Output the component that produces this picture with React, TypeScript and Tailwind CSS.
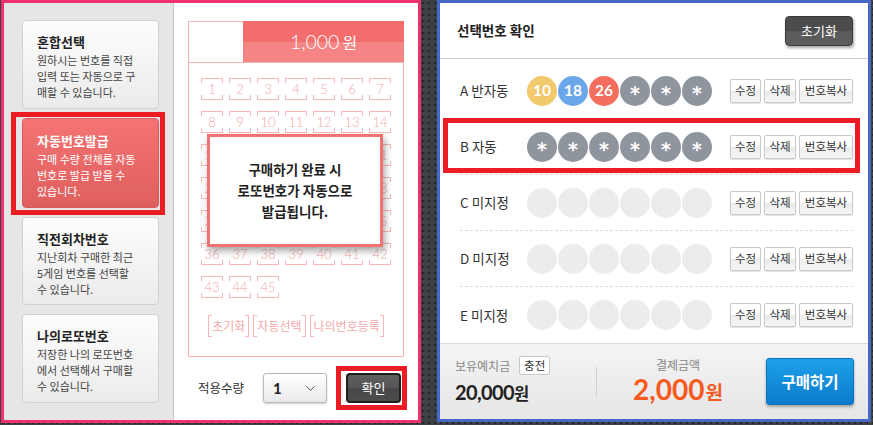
import React from 'react';
import { ChevronDown } from 'lucide-react';

const KR = "font-['Noto_Sans_CJK_KR',sans-serif]";
const NUM = "font-['Lato','Noto_Sans_CJK_KR',sans-serif]";

const sideCards = [
  { title: '혼합선택', lines: ['원하시는 번호를 직접', '입력 또는 자동으로 구', '매할 수 있습니다.'] },
  { title: '자동번호발급', lines: ['구매 수량 전체를 자동', '번호로 발급 받을 수', '있습니다.'] },
  { title: '직전회차번호', lines: ['지난회차 구매한 최근', '5게임 번호를 선택할', '수 있습니다.'] },
  { title: '나의로또번호', lines: ['저장한 나의 로또번호', '에서 선택해서 구매할', '수 있습니다.'] },
];

type Ball = { n: string; c: string };
const star: Ball = { n: '*', c: 'bg-[#8f959d]' };
const empty: Ball = { n: '', c: 'bg-[#ececec]' };

const rows: { label: string; balls: Ball[]; picked?: boolean }[] = [
  {
    label: 'A 반자동',
    balls: [
      { n: '10', c: 'bg-[#f2c96c]' },
      { n: '18', c: 'bg-[#6aa7e8]' },
      { n: '26', c: 'bg-[#f46e5f]' },
      star,
      star,
      star,
    ],
  },
  { label: 'B 자동', balls: [star, star, star, star, star, star], picked: true },
  { label: 'C 미지정', balls: [empty, empty, empty, empty, empty, empty] },
  { label: 'D 미지정', balls: [empty, empty, empty, empty, empty, empty] },
  { label: 'E 미지정', balls: [empty, empty, empty, empty, empty, empty] },
];

function SideCard({ title, lines, active, h }: { title: string; lines: string[]; active?: boolean; h: string }) {
  return (
    <div
      className={
        active
          ? `w-[137px] ${h} rounded-[4px] border border-[#d85c5c] bg-linear-to-b from-[#f47474] to-[#df5f5f] pl-[14px] pt-[13px] text-white`
          : `w-[137px] ${h} rounded-[4px] border border-[#d2d2d2] bg-linear-to-b from-[#fdfdfd] to-[#ebebeb] pl-[14px] pt-[12px] text-[#444]`
      }
    >
      <div className={`text-[13px] font-bold leading-[18px] ${active ? 'text-white' : 'text-[#222]'}`}>{title}</div>
      <div className="mt-[1px] text-[11px] leading-[16px]">
        {lines.map((l) => (
          <div key={l}>{l}</div>
        ))}
      </div>
    </div>
  );
}

function NumBox({ n }: { n: number }) {
  return (
    <div className="relative w-[22px] h-[22px] border border-[#f6b8b8] flex items-center justify-center">
      <span className="absolute -left-px -right-px top-[4px] bottom-[4px] bg-white" />
      <span className={`relative ${NUM} text-[13px] font-light leading-none text-[#f4a9a9]`}>{n}</span>
    </div>
  );
}

function BracketBtn({ label }: { label: string }) {
  return (
    <div className="relative h-[22px] px-[3px] border border-[#f6b8b8] flex items-center">
      <span className="absolute left-[3px] right-[3px] -top-px -bottom-px bg-white" />
      <span className="relative text-[12px] leading-none text-[#f4a9a9]">{label}</span>
    </div>
  );
}

function SmallBtn({ label, w }: { label: string; w: string }) {
  return (
    <div
      className={`${w} h-[24px] flex items-center justify-center rounded-[2px] border border-[#c9c9c9] bg-[image:linear-gradient(#ffffff_0%,#ffffff_50%,#ececec_51%,#f6f6f6_100%)] shadow-[0_1px_1px_rgba(0,0,0,0.12)] text-[11.5px] text-[#333]`}
    >
      {label}
    </div>
  );
}

export default function App() {
  const nums = Array.from({ length: 45 }, (_, i) => i + 1);

  return (
    <div
      className={`${KR} w-[873px] h-[425px] overflow-hidden flex gap-[16px] pl-[1px] bg-[#3d4044] bg-[image:radial-gradient(circle,#25272a_1px,transparent_1.6px)] bg-[length:6px_6px]`}
    >
      {/* left: 번호 선택 */}
      <div className="w-[420px] h-[423px] border-[3px] border-[#ef316d] bg-white flex">
        <div className="w-[170px] bg-[#e6e6e6] border-r border-[#c8c8c8] pl-[18px] pt-[17px] flex flex-col">
          <SideCard {...sideCards[0]} h="h-[89px]" />
          <div className="-ml-[11px] mt-[3px] w-[154px] border-[5px] border-[#ec1c24] pl-[6px] pt-[1px] pb-[2px]">
            <SideCard {...sideCards[1]} h="h-[90px]" active />
          </div>
          <div className="mt-[2px]">
            <SideCard {...sideCards[2]} h="h-[88px]" />
          </div>
          <div className="mt-[9px]">
            <SideCard {...sideCards[3]} h="h-[89px]" />
          </div>
        </div>

        <div className="relative flex-1 flex flex-col pl-[14px] pt-[18px]">
          <div className="w-[216px] h-[336px] border border-[#f5b4b4] flex flex-col">
            <div className="h-[42px] border-b border-[#f5b4b4] flex -mt-px -mr-px">
              <div className="w-[54px]" />
              <div className="flex-1 bg-[image:linear-gradient(#f36d6d_0%,#f36d6d_50%,#f58585_50%,#f58585_100%)] flex items-center justify-center text-white">
                <span className={`${NUM} text-[19.5px] font-light`}>1,000</span>
                <span className="ml-[3px] text-[16px]">원</span>
              </div>
            </div>
            <div className="pt-[15px] pl-[12px] grid grid-cols-[repeat(7,22px)] gap-x-[6px] gap-y-[11px]">
              {nums.map((n) => (
                <NumBox key={n} n={n} />
              ))}
            </div>
            <div className="mt-[17px] flex justify-center gap-[4px]">
              <BracketBtn label="초기화" />
              <BracketBtn label="자동선택" />
              <BracketBtn label="나의번호등록" />
            </div>
          </div>

          <div className="mt-[9px] flex items-center">
            <span className="ml-[10px] text-[12.5px] text-[#333]">적용수량</span>
            <div className="ml-[19px] w-[64px] h-[30px] rounded-[3px] border border-[#b9b9b9] bg-linear-to-b from-white to-[#e9e9e9] shadow-[0_1px_2px_rgba(0,0,0,0.2)] flex items-center justify-between pl-[9px] pr-[8px]">
              <span className={`${NUM} text-[15px] font-bold text-[#222]`}>1</span>
              <ChevronDown size={15} strokeWidth={1.5} color="#444" />
            </div>
            <div className="ml-[9px] w-[71px] border-[5px] border-[#ec1c24] pl-[5px] pr-[1px] py-[2px]">
              <div className="w-[55px] h-[30px] rounded-[4px] border-2 border-[#1f1f1f] bg-[image:linear-gradient(#5e5e5e_0%,#555_50%,#474747_50%,#4d4d4d_100%)] flex items-center justify-center text-[13px] text-white">
                확인
              </div>
            </div>
          </div>

          <div className="absolute left-[33px] top-[131px] w-[176px] h-[113px] border-[3px] border-[#f17272] bg-white shadow-[2px_4px_7px_rgba(0,0,0,0.35)] flex items-center justify-center text-center text-[13.5px] font-bold leading-[21px] text-[#222]">
            <div>
              구매하기 완료 시
              <br />
              로또번호가 자동으로
              <br />
              발급됩니다.
            </div>
          </div>
        </div>
      </div>

      {/* right: 선택번호 확인 */}
      <div className="w-[434px] h-[422px] border-[3px] border-[#4767c6] bg-white flex flex-col">
        <div className="h-[56px] shrink-0 border-b border-[#cfcfcf] flex items-center justify-between pl-[17px] pr-[15px]">
          <span className="text-[13.5px] font-bold text-[#222]">선택번호 확인</span>
          <div className="w-[68px] h-[30px] rounded-[4px] border border-[#3a3a3a] bg-[image:linear-gradient(#4c4c4c_0%,#4c4c4c_50%,#5a5a5a_50%,#5d5d5d_100%)] shadow-[1px_2px_3px_rgba(0,0,0,0.35)] flex items-center justify-center text-[13px] text-white">
            초기화
          </div>
        </div>

        <div className="pt-[4px]">
          {rows.map((r, i) => (
            <div
              key={r.label}
              className={`relative h-[56px] ml-[20px] mr-[15px] flex items-center ${i < rows.length - 1 ? 'border-b border-dashed border-[#dcdcdc]' : ''}`}
            >
              {r.picked && (
                <div className="absolute -left-[17px] -right-[7px] -top-px bottom-[1px] border-[5px] border-[#ec1c24]" />
              )}
              <span className="w-[67px] text-[13.5px] text-[#333]">{r.label}</span>
              <div className="flex gap-[1px]">
                {r.balls.map((b, j) => (
                  <div
                    key={j}
                    className={`w-[30px] h-[30px] rounded-full flex items-center justify-center font-bold text-white ${b.c} ${b.n === '*' ? "font-['DejaVu_Sans',sans-serif] text-[19px] pt-[5px]" : `${NUM} text-[15.5px]`}`}
                  >
                    {b.n}
                  </div>
                ))}
              </div>
              <div className="ml-auto flex gap-[3px]">
                <SmallBtn label="수정" w="w-[31px]" />
                <SmallBtn label="삭제" w="w-[32px]" />
                <SmallBtn label="번호복사" w="w-[54px]" />
              </div>
            </div>
          ))}
        </div>

        <div className="flex-1 border-t border-[#d9d9d9] bg-linear-to-b from-[#f4f4f4] to-[#e6e6e6] flex items-center pl-[15px] pr-[14px]">
          <div className="w-[141px]">
            <div className="flex items-center">
              <span className="text-[12px] text-[#888]">보유예치금</span>
              <div className="ml-[9px] w-[31px] h-[19px] rounded-[2px] border border-[#c8c8c8] bg-white flex items-center justify-center text-[11.5px] text-[#333]">
                충전
              </div>
            </div>
            <div className="mt-[2px] flex items-baseline text-[#222] font-bold">
              <span className={`${NUM} text-[20px] tracking-[-0.6px]`}>20,000</span>
              <span className="text-[16.5px]">원</span>
            </div>
          </div>
          <div className="w-px h-[30px] bg-[#cfcfcf]" />
          <div className="w-[162px] flex flex-col items-center">
            <span className="text-[12px] text-[#888]">결제금액</span>
            <div className="-mt-[2px] flex items-baseline font-bold text-[#f55a1f]">
              <span className={`${NUM} text-[28px] leading-[34px]`}>2,000</span>
              <span className="ml-[1px] text-[19px]">원</span>
            </div>
          </div>
          <div className="ml-auto w-[88px] h-[47px] rounded-[3px] border border-[#0b73bf] bg-linear-to-b from-[#1ea0e8] to-[#0a7ccd] shadow-[0_2px_3px_rgba(0,0,0,0.3)] flex items-center justify-center text-[15.5px] font-bold text-white">
            구매하기
          </div>
        </div>
      </div>
    </div>
  );
}
